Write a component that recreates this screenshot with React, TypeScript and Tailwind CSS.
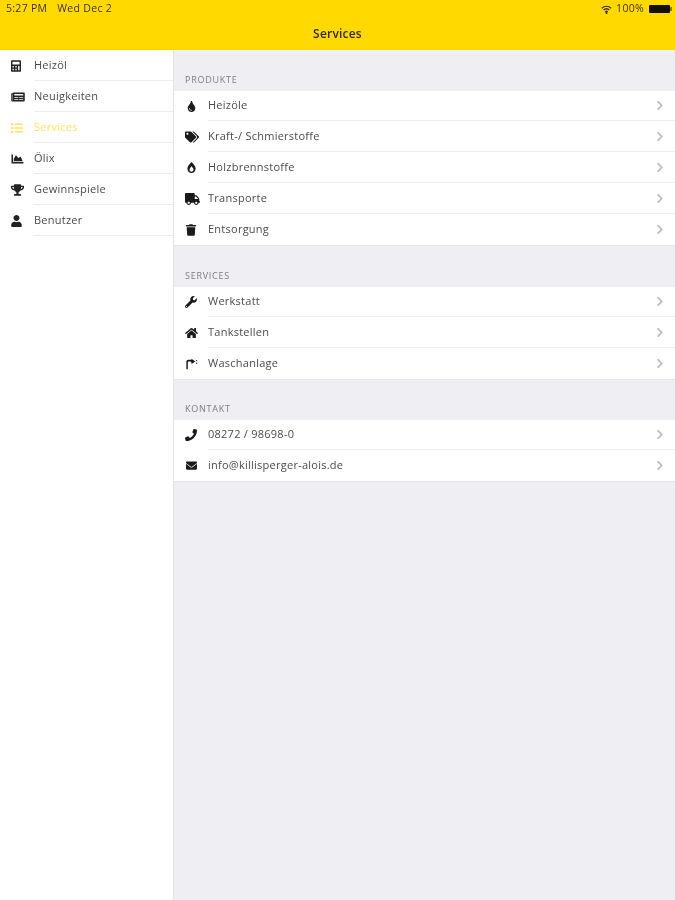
import type { ReactNode } from 'react';
import {
  FaBurn,
  FaCalculator,
  FaChartArea,
  FaChevronRight,
  FaEnvelope,
  FaHome,
  FaList,
  FaNewspaper,
  FaPhone,
  FaTags,
  FaTint,
  FaTrash,
  FaTrophy,
  FaTruck,
  FaUser,
  FaWrench,
} from 'react-icons/fa';

// Small spray gun, not in the icon packs
function WashIcon({ className }: { className?: string }) {
  return (
    <svg viewBox="0 0 14 14" className={className} fill="currentColor">
      <path d="M1 13V4.5C1 3 2 2 3.5 2H7V1l4.5 3L7 7V5.4L6 4.2H3.8C3.1 4.2 2.7 4.7 2.7 5.4V13H1z" />
      <circle cx="13" cy="3" r="0.8" />
      <circle cx="13" cy="6" r="0.8" />
    </svg>
  );
}

const menu = [
  { label: 'Heizöl', icon: <FaCalculator className="w-[10px] h-[12px]" /> },
  { label: 'Neuigkeiten', icon: <FaNewspaper className="w-[14px] h-[12px]" /> },
  { label: 'Services', icon: <FaList className="w-[12px] h-[12px]" />, active: true },
  { label: 'Ölix', icon: <FaChartArea className="w-[13px] h-[12px]" /> },
  { label: 'Gewinnspiele', icon: <FaTrophy className="w-[13px] h-[12px]" /> },
  { label: 'Benutzer', icon: <FaUser className="w-[11px] h-[12px]" /> },
];

const sections: { title: string; labelHeight: string; items: { label: string; icon: ReactNode }[] }[] = [
  {
    title: 'PRODUKTE',
    labelHeight: 'h-[41px]',
    items: [
      { label: 'Heizöle', icon: <FaTint className="w-[11px] h-[11px] ml-[1px]" /> },
      { label: 'Kraft-/ Schmierstoffe', icon: <FaTags className="w-[14px] h-[12px]" /> },
      { label: 'Holzbrennstoffe', icon: <FaBurn className="w-[11px] h-[11px] ml-[1px]" /> },
      { label: 'Transporte', icon: <FaTruck className="w-[15px] h-[12px]" /> },
      { label: 'Entsorgung', icon: <FaTrash className="w-[10px] h-[12px] ml-[1px]" /> },
    ],
  },
  {
    title: 'SERVICES',
    labelHeight: 'h-[41px]',
    items: [
      { label: 'Werkstatt', icon: <FaWrench className="w-[12px] h-[12px]" /> },
      { label: 'Tankstellen', icon: <FaHome className="w-[13px] h-[12px]" /> },
      { label: 'Waschanlage', icon: <WashIcon className="w-[13px] h-[12px]" /> },
    ],
  },
  {
    title: 'KONTAKT',
    labelHeight: 'h-[40px]',
    items: [
      { label: '08272 / 98698-0', icon: <FaPhone className="w-[12px] h-[12px]" /> },
      { label: 'info@killisperger-alois.de', icon: <FaEnvelope className="w-[13px] h-[11px]" /> },
    ],
  },
];

export default function App() {
  return (
    <div className="w-[675px] h-[900px] flex flex-col overflow-hidden bg-white font-['Open_Sans',sans-serif] blur-[0.4px]">
      {/* Header */}
      <div className="h-[50px] bg-[#ffd900] shrink-0">
        <div className="h-[18px] pl-[6px] pr-[3px] flex items-center justify-between text-[10.5px] tracking-[0.3px] text-[#3b3300]">
          <div className="flex gap-[10px]">
            <span>5:27 PM</span>
            <span>Wed Dec 2</span>
          </div>
          <div className="flex items-center gap-[4px]">
            <svg viewBox="0 0 14 11" className="w-[11px] h-[9px]" fill="none" stroke="currentColor" strokeWidth="1.6">
              <path d="M1 4C4.5.8 9.5.8 13 4" />
              <path d="M3.3 6.2c2.2-2 5.2-2 7.4 0" />
              <path d="M5.5 8.3c.9-.8 2.1-.8 3 0" />
              <circle cx="7" cy="9.8" r="0.6" fill="currentColor" />
            </svg>
            <span>100%</span>
            <div className="flex items-center ml-[1px]">
              <div className="w-[21px] h-[8px] bg-[#141000] rounded-[1px]" />
              <div className="w-[2px] h-[4px] bg-[#8a7700]" />
            </div>
          </div>
        </div>
        <div className="h-[32px] flex items-center justify-center text-[12px] font-semibold text-[#2e2900] tracking-[0.2px]">
          Services
        </div>
      </div>

      <div className="flex flex-1 min-h-0">
        {/* Sidebar */}
        <div className="w-[174px] shrink-0 bg-white border-r border-[#e3e3e6]">
          {menu.map(item => (
            <div
              key={item.label}
              className={`h-[31px] flex items-center ${item.active ? 'text-[#ffe45c]' : 'text-[#4b4b4b]'}`}
            >
              <div className={`w-[34px] pl-[11px] shrink-0 ${item.active ? 'text-[#ffe45c]' : 'text-[#222]'}`}>
                {item.icon}
              </div>
              <div className="flex-1 h-full flex items-center border-b border-[#ececef] text-[11px] tracking-[0.25px]">
                {item.label}
              </div>
            </div>
          ))}
        </div>

        {/* Service lists */}
        <div className="flex-1 bg-[#eeeef3]">
          {sections.map(section => (
            <div key={section.title}>
              <div className={`${section.labelHeight} px-[11px] pb-[5px] flex items-end text-[9px] tracking-[0.75px] text-[#7d7d82]`}>
                {section.title}
              </div>
              <div className="bg-white border-b border-[#e6e6ea]">
                {section.items.map((item, n) => (
                  <div
                    key={item.label}
                    className={`${n === 0 ? 'h-[30px]' : 'h-[31px]'} flex items-center text-[#4b4b4b]`}
                  >
                    <div className="w-[34px] pl-[11px] shrink-0 text-[#1a1a1a]">{item.icon}</div>
                    <div
                      className={`flex-1 h-full flex items-center pr-[11px] justify-between text-[11px] tracking-[0.25px] ${
                        n < section.items.length - 1 ? 'border-b border-[#ececef]' : ''
                      }`}
                    >
                      <span>{item.label}</span>
                      <FaChevronRight className="w-[8px] h-[11px] text-[#bcbcc0]" />
                    </div>
                  </div>
                ))}
              </div>
            </div>
          ))}
        </div>
      </div>
    </div>
  );
}
